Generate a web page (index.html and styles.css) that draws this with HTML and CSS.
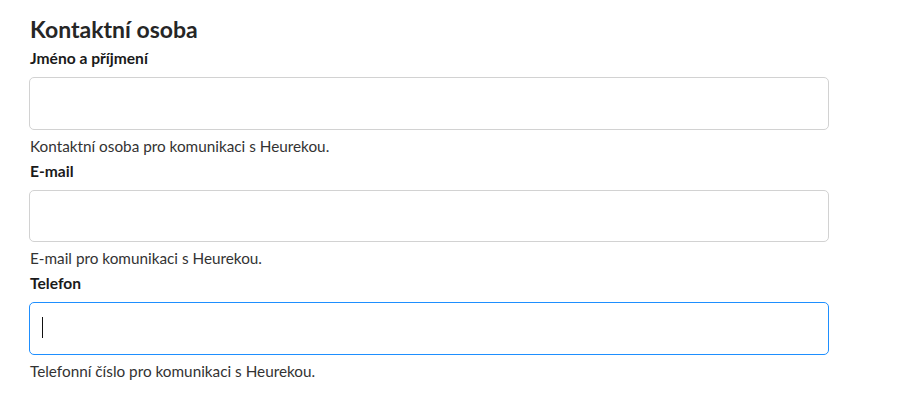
FILE: index.html
```html
<!DOCTYPE html>
<html lang="cs">
<head>
<meta charset="utf-8">
<title>Kontaktní osoba</title>
<link rel="stylesheet" href="styles.css">
</head>
<body>
<section class="form">
  <h2 class="title">Kontaktní osoba</h2>
  <div class="field">
    <label class="label" for="name">Jméno a příjmení</label>
    <div class="control"><input class="input" id="name" type="text"></div>
    <p class="help">Kontaktní osoba pro komunikaci s Heurekou.</p>
  </div>
  <div class="field">
    <label class="label" for="email">E-mail</label>
    <div class="control"><input class="input" id="email" type="email"></div>
    <p class="help">E-mail pro komunikaci s Heurekou.</p>
  </div>
  <div class="field">
    <label class="label" for="phone">Telefon</label>
    <div class="control"><input class="input input-focus" id="phone" type="tel"><span class="caret"></span></div>
    <p class="help">Telefonní číslo pro komunikaci s Heurekou.</p>
  </div>
</section>
</body>
</html>
```
FILE: styles.css
```css
* { box-sizing: border-box; }
html, body { margin: 0; padding: 0; background: #fff; }
body {
  font-family: Lato, "Noto Sans", sans-serif;
  color: #262626;
}
.form {
  padding: 15px 0 0 29px;
  width: 829px;
}
.title {
  margin: 0 0 7px 1px;
  font-size: 23px;
  line-height: 28px;
  font-weight: 700;
  color: #262626;
}
.field { margin-bottom: 9px; }
.label {
  display: block;
  margin-left: 1px;
  font-size: 15.6px;
  line-height: 16px;
  font-weight: 700;
  color: #1a1a1a;
}
.control {
  position: relative;
  margin-top: 11px;
}
.input {
  display: block;
  width: 800px;
  height: 52.5px;
  margin: 0;
  padding: 0 12px;
  border: 1px solid #d2d2d2;
  border-radius: 5px;
  background: #fff;
  font: inherit;
  outline: none;
}
.input-focus { border-color: #1e8fff; }
.caret {
  position: absolute;
  left: 13px;
  top: 15px;
  width: 1px;
  height: 21px;
  background: #111;
}
.help {
  margin: 8px 0 0 1px;
  font-size: 15.3px;
  line-height: 16px;
  color: #333;
}
```
